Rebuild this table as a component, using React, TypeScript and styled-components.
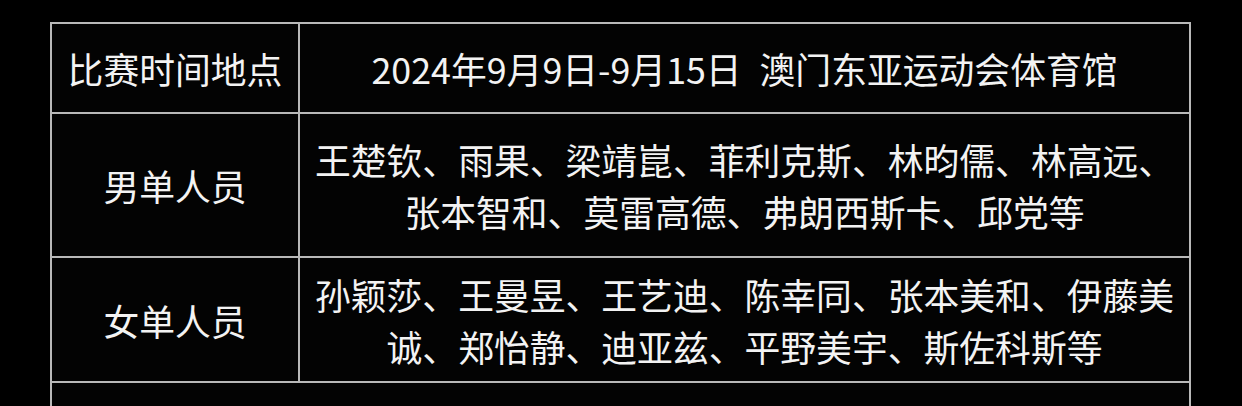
import React from "react";
import styled, { createGlobalStyle } from "styled-components";

const GlobalStyle = createGlobalStyle`
  html, body {
    margin: 0;
    padding: 0;
    background: #000;
    overflow: hidden;
  }
  body {
    font-family: "Noto Sans CJK SC", "Noto Sans", sans-serif;
  }
`;

const Page = styled.div`
  width: 1242px;
  height: 406px;
  background: #000;
  padding: 22px 0 0 50px;
  box-sizing: border-box;
`;

const Table = styled.div`
  width: 1141px;
  box-sizing: border-box;
  padding: 2px;
  background: #b9b9b9;
  display: grid;
  grid-template-columns: 246px 1fr;
  grid-auto-rows: auto;
  gap: 2px;
`;

const Cell = styled.div<{ $h: number; $span?: boolean }>`
  background: #030303;
  height: ${(p) => p.$h}px;
  grid-column: ${(p) => (p.$span ? "1 / -1" : "auto")};
  display: flex;
  align-items: center;
  justify-content: center;
  text-align: center;
  color: #f3f3f3;
  font-size: 35.8px;
  line-height: 52px;
  font-weight: 400;
  padding: 0 8px;
  box-sizing: border-box;
`;

const Label = styled.span`
  white-space: nowrap;
`;

const Text = styled.span`
  display: block;
  width: 100%;
`;

const rows = [
  {
    h: 88,
    label: "比赛时间地点",
    value: "2024年9月9日-9月15日\u2002澳门东亚运动会体育馆",
  },
  {
    h: 142,
    label: "男单人员",
    value:
      "王楚钦、雨果、梁靖崑、菲利克斯、林昀儒、林高远、张本智和、莫雷高德、弗朗西斯卡、邱党等",
  },
  {
    h: 123,
    label: "女单人员",
    value:
      "孙颖莎、王曼昱、王艺迪、陈幸同、张本美和、伊藤美诚、郑怡静、迪亚兹、平野美宇、斯佐科斯等",
  },
];

export default function App() {
  return (
    <>
      <GlobalStyle />
      <Page>
        <Table>
          {rows.map((r) => (
            <React.Fragment key={r.label}>
              <Cell $h={r.h}>
                <Label>{r.label}</Label>
              </Cell>
              <Cell $h={r.h}>
                <Text>{r.value}</Text>
              </Cell>
            </React.Fragment>
          ))}
          <Cell $h={100} $span />
        </Table>
      </Page>
    </>
  );
}
